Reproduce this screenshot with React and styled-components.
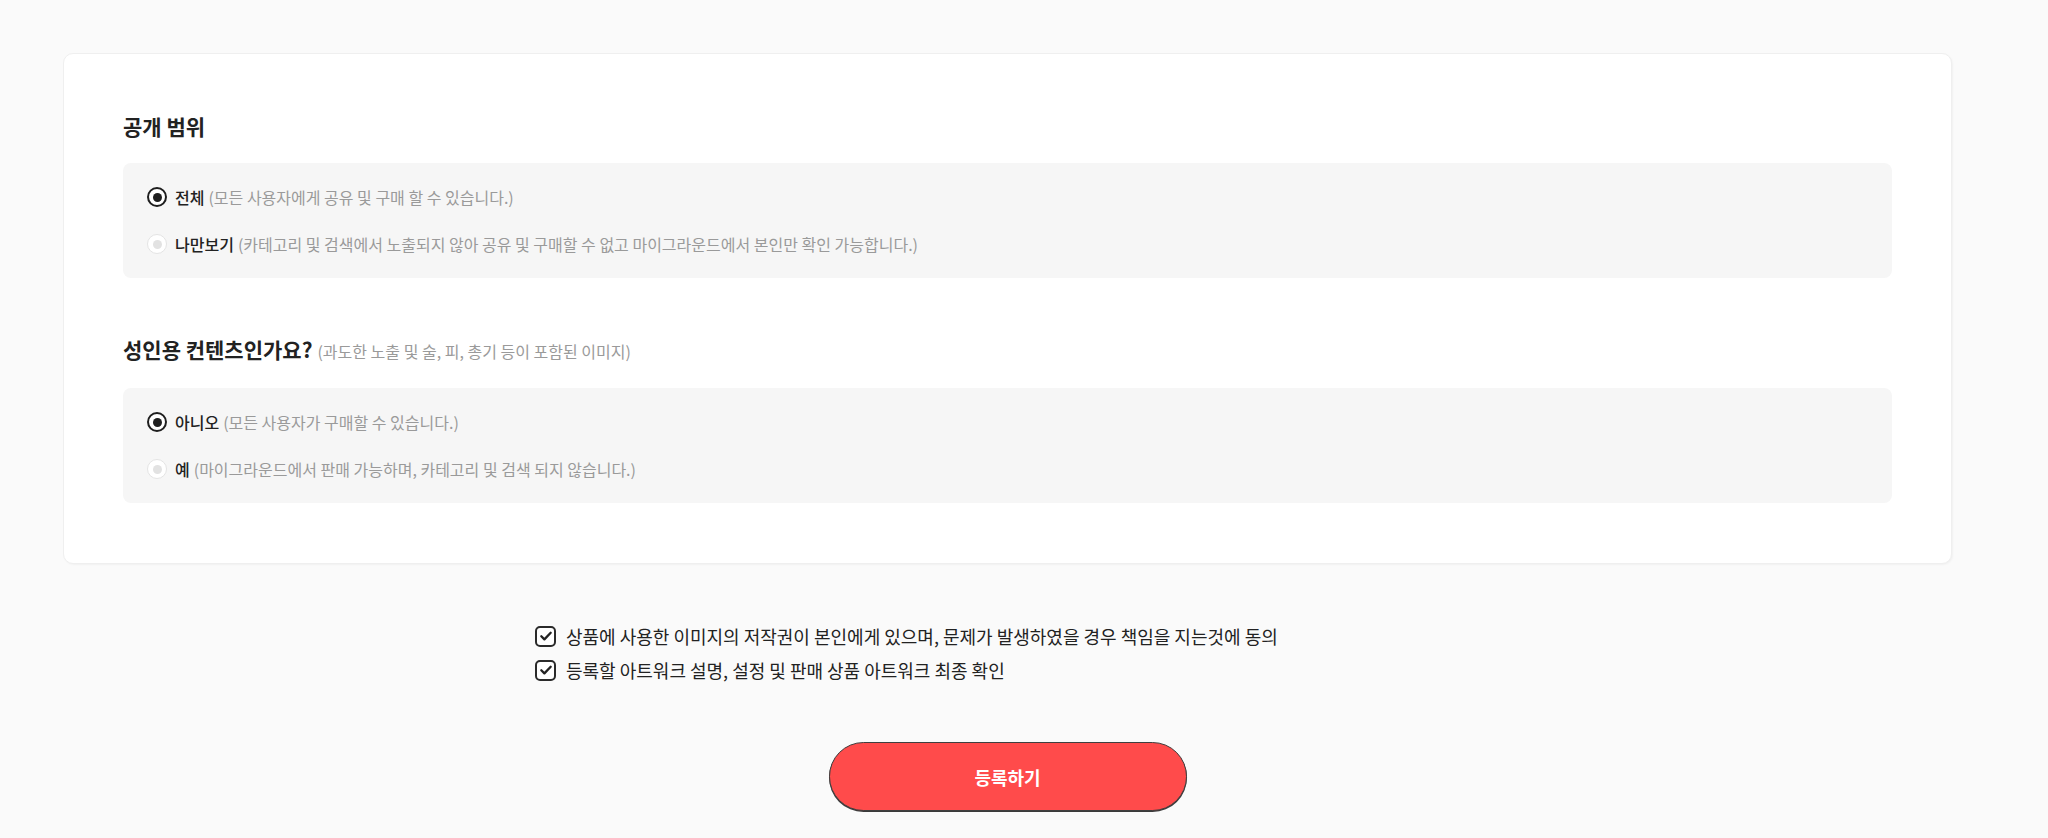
import React, { useState } from "react";
import styled, { createGlobalStyle } from "styled-components";

const GlobalStyle = createGlobalStyle`
  html, body {
    margin: 0;
    padding: 0;
    background: #fafafa;
  }
  body {
    font-family: "Noto Sans CJK KR", "Noto Sans", sans-serif;
    color: #222;
  }
  * { box-sizing: border-box; }
`;

const Page = styled.div`
  padding: 53px 96px 40px 63px;
  display: flex;
  flex-direction: column;
`;

const Card = styled.section`
  background: #fff;
  border: 1px solid #efefef;
  border-radius: 10px;
  box-shadow: 1px 1px 2px rgba(0, 0, 0, 0.04);
  padding: 58px 59px 60px 59px;
  display: flex;
  flex-direction: column;
  gap: 57px;
`;

const Section = styled.div`
  display: flex;
  flex-direction: column;
  gap: 23px;
`;

const Heading = styled.h3`
  margin: 0;
  font-size: 21px;
  line-height: 28px;
  font-weight: 700;
  color: #222;
  display: flex;
  align-items: baseline;
  gap: 5px;
`;

const Note = styled.span`
  font-size: 16px;
  font-weight: 400;
  color: #9a9a9a;
`;

const Panel = styled.div`
  background: #f6f6f6;
  border-radius: 8px;
  padding: 22px 24px;
  display: flex;
  flex-direction: column;
  gap: 23px;
`;

const RadioRow = styled.label`
  display: flex;
  align-items: center;
  gap: 8px;
  height: 24px;
  font-size: 16px;
  cursor: pointer;
`;

const RadioMark = styled.span`
  width: 20px;
  height: 20px;
  border-radius: 50%;
  flex: none;
  display: flex;
  align-items: center;
  justify-content: center;
  background: #fff;
  border: ${(p) => (p.$on ? "2.5px solid #1e1e1e" : "1.5px solid #e4e4e4")};
  &::after {
    content: "";
    width: 9px;
    height: 9px;
    border-radius: 50%;
    background: ${(p) => (p.$on ? "#1e1e1e" : "#e2e2e2")};
  }
`;

const LabelMain = styled.span`
  color: #222;
  font-weight: 500;
`;

const LabelDesc = styled.span`
  color: #9a9a9a;
  margin-left: 4px;
`;

const Agreements = styled.div`
  width: 947px;
  margin: 58px auto 0;
  display: flex;
  flex-direction: column;
  gap: 6px;
  padding-left: 1px;
`;

const CheckRow = styled.label`
  display: flex;
  align-items: center;
  gap: 10px;
  height: 28px;
  font-size: 18px;
  color: #222;
  cursor: pointer;
`;

const CheckBox = styled.span`
  width: 21px;
  height: 21px;
  flex: none;
  border: 2px solid #2a2a2a;
  border-radius: 5px;
  background: #fff;
  display: flex;
  align-items: center;
  justify-content: center;
`;

const SubmitButton = styled.button`
  align-self: center;
  margin-top: 58px;
  width: 358px;
  height: 69px;
  border-radius: 35px;
  background: #ff4b4b;
  border: 1px solid #3f3f3f;
  box-shadow: 0 1px 0 #3a3a3a;
  color: #fff;
  font-family: "Noto Sans CJK KR", "Noto Sans", sans-serif;
  font-size: 18px;
  font-weight: 700;
  cursor: pointer;
`;

function Radio({ on, main, desc, onClick }) {
  return (
    <RadioRow onClick={onClick}>
      <RadioMark $on={on} />
      <span>
        <LabelMain>{main}</LabelMain>
        <LabelDesc>{desc}</LabelDesc>
      </span>
    </RadioRow>
  );
}

function Check({ children }) {
  return (
    <CheckRow>
      <CheckBox>
        <svg width="14" height="14" viewBox="0 0 14 14" fill="none">
          <path d="M2.3 7.3l3.1 3.1 6.3-6.6" stroke="#222" strokeWidth="2.3" strokeLinecap="round" strokeLinejoin="round" />
        </svg>
      </CheckBox>
      <span>{children}</span>
    </CheckRow>
  );
}

export default function App() {
  const [scope, setScope] = useState(0);
  const [adult, setAdult] = useState(0);
  return (
    <>
      <GlobalStyle />
      <Page>
        <Card>
          <Section>
            <Heading>공개 범위</Heading>
            <Panel>
              <Radio on={scope === 0} onClick={() => setScope(0)} main="전체" desc="(모든 사용자에게 공유 및 구매 할 수 있습니다.)" />
              <Radio on={scope === 1} onClick={() => setScope(1)} main="나만보기" desc="(카테고리 및 검색에서 노출되지 않아 공유 및 구매할 수 없고 마이그라운드에서 본인만 확인 가능합니다.)" />
            </Panel>
          </Section>
          <Section>
            <Heading>
              성인용 컨텐츠인가요?
              <Note>(과도한 노출 및 술, 피, 총기 등이 포함된 이미지)</Note>
            </Heading>
            <Panel>
              <Radio on={adult === 0} onClick={() => setAdult(0)} main="아니오" desc="(모든 사용자가 구매할 수 있습니다.)" />
              <Radio on={adult === 1} onClick={() => setAdult(1)} main="예" desc="(마이그라운드에서 판매 가능하며, 카테고리 및 검색 되지 않습니다.)" />
            </Panel>
          </Section>
        </Card>
        <Agreements>
          <Check>상품에 사용한 이미지의 저작권이 본인에게 있으며, 문제가 발생하였을 경우 책임을 지는것에 동의</Check>
          <Check>등록할 아트워크 설명, 설정 및 판매 상품 아트워크 최종 확인</Check>
        </Agreements>
        <SubmitButton>등록하기</SubmitButton>
      </Page>
    </>
  );
}
